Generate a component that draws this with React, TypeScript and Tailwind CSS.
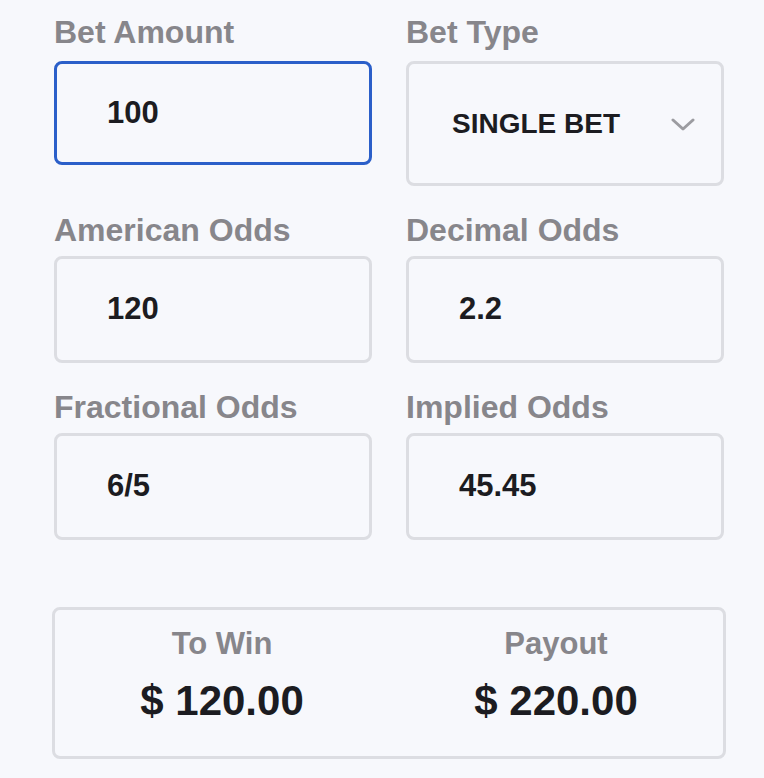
import { useState } from "react";

const Field = ({ label, value, active, first }: { label: string; value: string; active?: boolean; first?: boolean }) => (
    <div className="flex flex-col">
        <span className={`h-[36px] leading-[36px] text-[32px] font-bold text-[#87868b] ${first ? "mb-[11px]" : "mb-[8px]"}`}>
            {label}
        </span>
        <div
            className={`flex items-center pl-[50px] rounded-lg bg-[#f7f8fc] border-[3px] ${
                active ? "border-[#2b5fc9] h-[104px]" : "border-[#dcdde2] h-[107px]"
            }`}
        >
            <span className="text-[31px] font-bold text-[#1c1c21]">{value}</span>
        </div>
    </div>
);

const App = () => {
    const [betType] = useState<string>("SINGLE BET");

    return (
        <div
            className="w-[764px] h-[778px] bg-[#f7f8fc] overflow-hidden"
            style={{ fontFamily: '"Liberation Sans", Arial, sans-serif' }}
        >
            <div className="ml-[54px] w-[670px] pt-[14px] grid grid-cols-2 gap-x-[34px] gap-y-[26px] items-start">
                <Field label="Bet Amount" value="100" active first />
                <div className="flex flex-col">
                    <span className="h-[36px] leading-[36px] mb-[11px] text-[32px] font-bold text-[#87868b]">Bet Type</span>
                    <div className="flex items-center justify-between h-[125px] pl-[43px] pr-[26px] rounded-lg border-[3px] border-[#dcdde2]">
                        <span className="text-[28px] font-bold text-[#1c1c21]">{betType}</span>
                        <svg width="24" height="14" viewBox="0 0 24 14" fill="none" className="mt-[2px]">
                            <polyline points="2,2 12,11 22,2" stroke="#9c9ca1" strokeWidth="3" strokeLinecap="round" strokeLinejoin="round" />
                        </svg>
                    </div>
                </div>
                <Field label="American Odds" value="120" />
                <Field label="Decimal Odds" value="2.2" />
                <Field label="Fractional Odds" value="6/5" />
                <Field label="Implied Odds" value="45.45" />
            </div>

            <div className="ml-[52px] mt-[67px] w-[674px] h-[152px] rounded-lg border-[3px] border-[#dcdde2] grid grid-cols-2 pt-[16px]">
                <div className="flex flex-col items-center">
                    <span className="h-[36px] leading-[36px] text-[31px] font-bold text-[#87868b]">To Win</span>
                    <span className="mt-[15px] h-[48px] leading-[48px] text-[42px] font-bold text-[#1c1c21]">$ 120.00</span>
                </div>
                <div className="flex flex-col items-center">
                    <span className="h-[36px] leading-[36px] text-[31px] font-bold text-[#87868b]">Payout</span>
                    <span className="mt-[15px] h-[48px] leading-[48px] text-[42px] font-bold text-[#1c1c21]">$ 220.00</span>
                </div>
            </div>
        </div>
    );
};

export default App;
